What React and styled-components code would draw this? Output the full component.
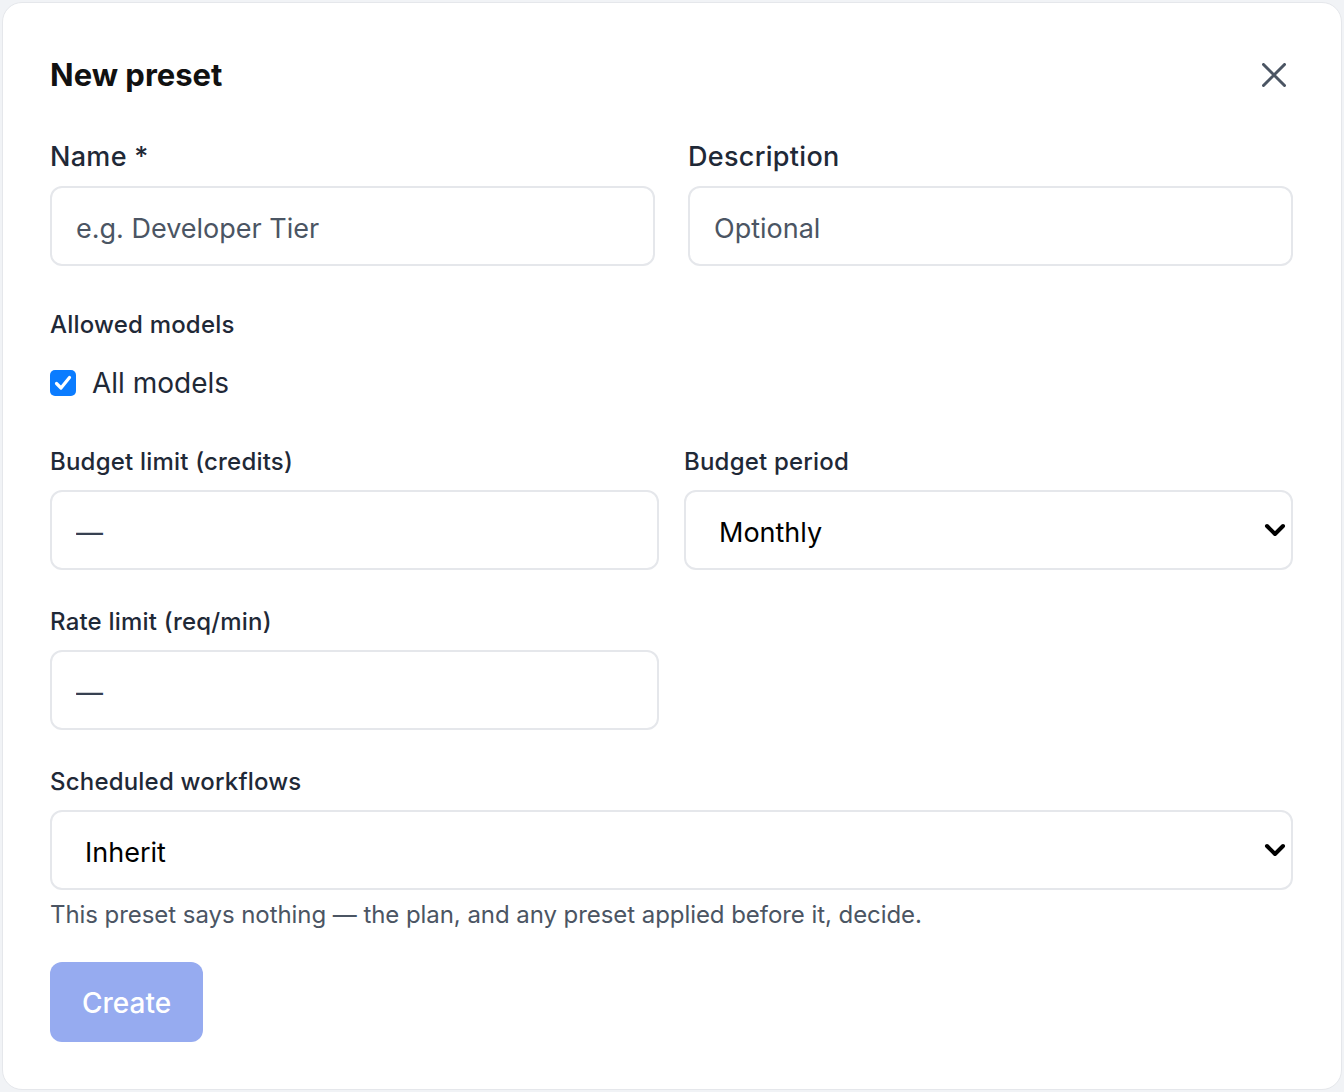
import React from "react";
import styled, { createGlobalStyle } from "styled-components";

const GlobalStyle = createGlobalStyle`
  html, body { margin: 0; padding: 0; }
  body {
    background: #f1f3f6;
    font-family: Inter, "Noto Sans", "Liberation Sans", sans-serif;
    -webkit-font-smoothing: antialiased;
  }
  * { box-sizing: border-box; }
`;

const Page = styled.div`
  padding: 2px;
  min-height: 1092px;
`;

const Card = styled.div`
  background: #ffffff;
  border: 1px solid #e5e7eb;
  border-radius: 20px;
  height: 1088px;
  padding: 54px 48px 0 47px;
`;

const Header = styled.div`
  display: flex;
  align-items: center;
  justify-content: space-between;
  margin-bottom: 44px;
`;

const Title = styled.h2`
  margin: 0;
  font-size: 31px;
  line-height: 36px;
  font-weight: 700;
  color: #111111;
`;

const CloseButton = styled.button`
  border: 0;
  background: transparent;
  padding: 4px;
  margin-right: 3px;
  display: flex;
  cursor: pointer;
  color: #4b5563;
`;

const Grid = styled.div`
  display: grid;
  grid-template-columns: 1fr 1fr;
  column-gap: ${(p) => p.$colGap}px;
  row-gap: 35px;
  margin-bottom: ${(p) => p.$mb}px;
`;

const Field = styled.div`
  display: flex;
  flex-direction: column;
  gap: ${(p) => (p.$large ? 10 : 11)}px;
`;

const Label = styled.label`
  font-size: ${(p) => (p.$large ? 27 : 24)}px;
  line-height: ${(p) => (p.$large ? 39 : 34)}px;
  letter-spacing: ${(p) => (p.$large ? 0.3 : 0.2)}px;
  font-weight: 500;
  color: #1f2937;
`;

const Input = styled.input`
  height: 80px;
  width: 100%;
  border: 2px solid #e5e7eb;
  border-radius: 12px;
  padding: 4px 24px 0;
  font-family: inherit;
  font-size: 27px;
  color: #111827;
  outline: none;
  background: #fff;
  &::placeholder {
    color: ${(p) => (p.$dash ? "#374151" : "#4b5563")};
  }
`;

const SelectWrap = styled.div`
  position: relative;
  width: 100%;
`;

const Select = styled.select`
  appearance: none;
  -webkit-appearance: none;
  height: 80px;
  width: 100%;
  border: 2px solid #e5e7eb;
  border-radius: 12px;
  padding: 4px 40px 0 33px;
  font-family: inherit;
  font-size: 27px;
  color: #000;
  background: #fff;
  outline: none;
`;

const Chevron = styled.svg`
  position: absolute;
  right: 7px;
  top: 50%;
  transform: translateY(-50%);
  pointer-events: none;
`;

const Section = styled.div`
  display: flex;
  flex-direction: column;
  margin-bottom: ${(p) => p.$mb}px;
`;

const CheckRow = styled.label`
  display: flex;
  align-items: center;
  gap: 16px;
  height: 40px;
  margin-top: 21px;
  font-size: 28px;
  color: #1f2937;
`;

const CheckBox = styled.span`
  width: 26px;
  height: 26px;
  border-radius: 5px;
  background: #0b7cff;
  display: flex;
  align-items: center;
  justify-content: center;
`;

const Helper = styled.p`
  margin: 8px 0 30px;
  font-size: 24px;
  line-height: 34px;
  letter-spacing: -0.06px;
  color: #4b5563;
`;

const Button = styled.button`
  height: 80px;
  padding: 2px 32px 0;
  border: 0;
  border-radius: 12px;
  background: #96abf0;
  color: #ffffff;
  font-family: inherit;
  font-size: 28px;
  font-weight: 500;
  cursor: not-allowed;
`;

function SelectField({ value, options }) {
  return (
    <SelectWrap>
      <Select defaultValue={value}>
        {options.map((o) => (
          <option key={o}>{o}</option>
        ))}
      </Select>
      <Chevron width="22" height="14" viewBox="0 0 22 14">
        <polyline
          points="3,3 11,11 19,3"
          fill="none"
          stroke="#000"
          strokeWidth="4"
          strokeLinecap="round"
          strokeLinejoin="round"
        />
      </Chevron>
    </SelectWrap>
  );
}

export default function App() {
  return (
    <>
      <GlobalStyle />
      <Page>
        <Card>
          <Header>
            <Title>New preset</Title>
            <CloseButton aria-label="Close">
              <svg width="24" height="24" viewBox="0 0 24 24">
                <path
                  d="M1.5 1.5 L22.5 22.5 M22.5 1.5 L1.5 22.5"
                  stroke="currentColor"
                  strokeWidth="3"
                  strokeLinecap="round"
                />
              </svg>
            </CloseButton>
          </Header>

          <Grid $colGap={33} $mb={42}>
            <Field $large>
              <Label $large>Name *</Label>
              <Input placeholder="e.g. Developer Tier" />
            </Field>
            <Field $large>
              <Label $large>Description</Label>
              <Input placeholder="Optional" />
            </Field>
          </Grid>

          <Section $mb={42}>
            <Label>Allowed models</Label>
            <CheckRow>
              <CheckBox>
                <svg width="20" height="20" viewBox="0 0 20 20">
                  <polyline
                    points="3.5,10.5 8,15 16.5,4.5"
                    fill="none"
                    stroke="#fff"
                    strokeWidth="3.2"
                    strokeLinecap="round"
                    strokeLinejoin="round"
                  />
                </svg>
              </CheckBox>
              All models
            </CheckRow>
          </Section>

          <Grid $colGap={25} $mb={35}>
            <Field>
              <Label>Budget limit (credits)</Label>
              <Input $dash placeholder="—" />
            </Field>
            <Field>
              <Label>Budget period</Label>
              <SelectField
                value="Monthly"
                options={["Daily", "Weekly", "Monthly"]}
              />
            </Field>
            <Field>
              <Label>Rate limit (req/min)</Label>
              <Input $dash placeholder="—" />
            </Field>
          </Grid>

          <Field>
            <Label>Scheduled workflows</Label>
            <SelectField value="Inherit" options={["Inherit", "Allow", "Deny"]} />
          </Field>
          <Helper>
            This preset says nothing — the plan, and any preset applied before
            it, decide.
          </Helper>
          <Button disabled>Create</Button>
        </Card>
      </Page>
    </>
  );
}
